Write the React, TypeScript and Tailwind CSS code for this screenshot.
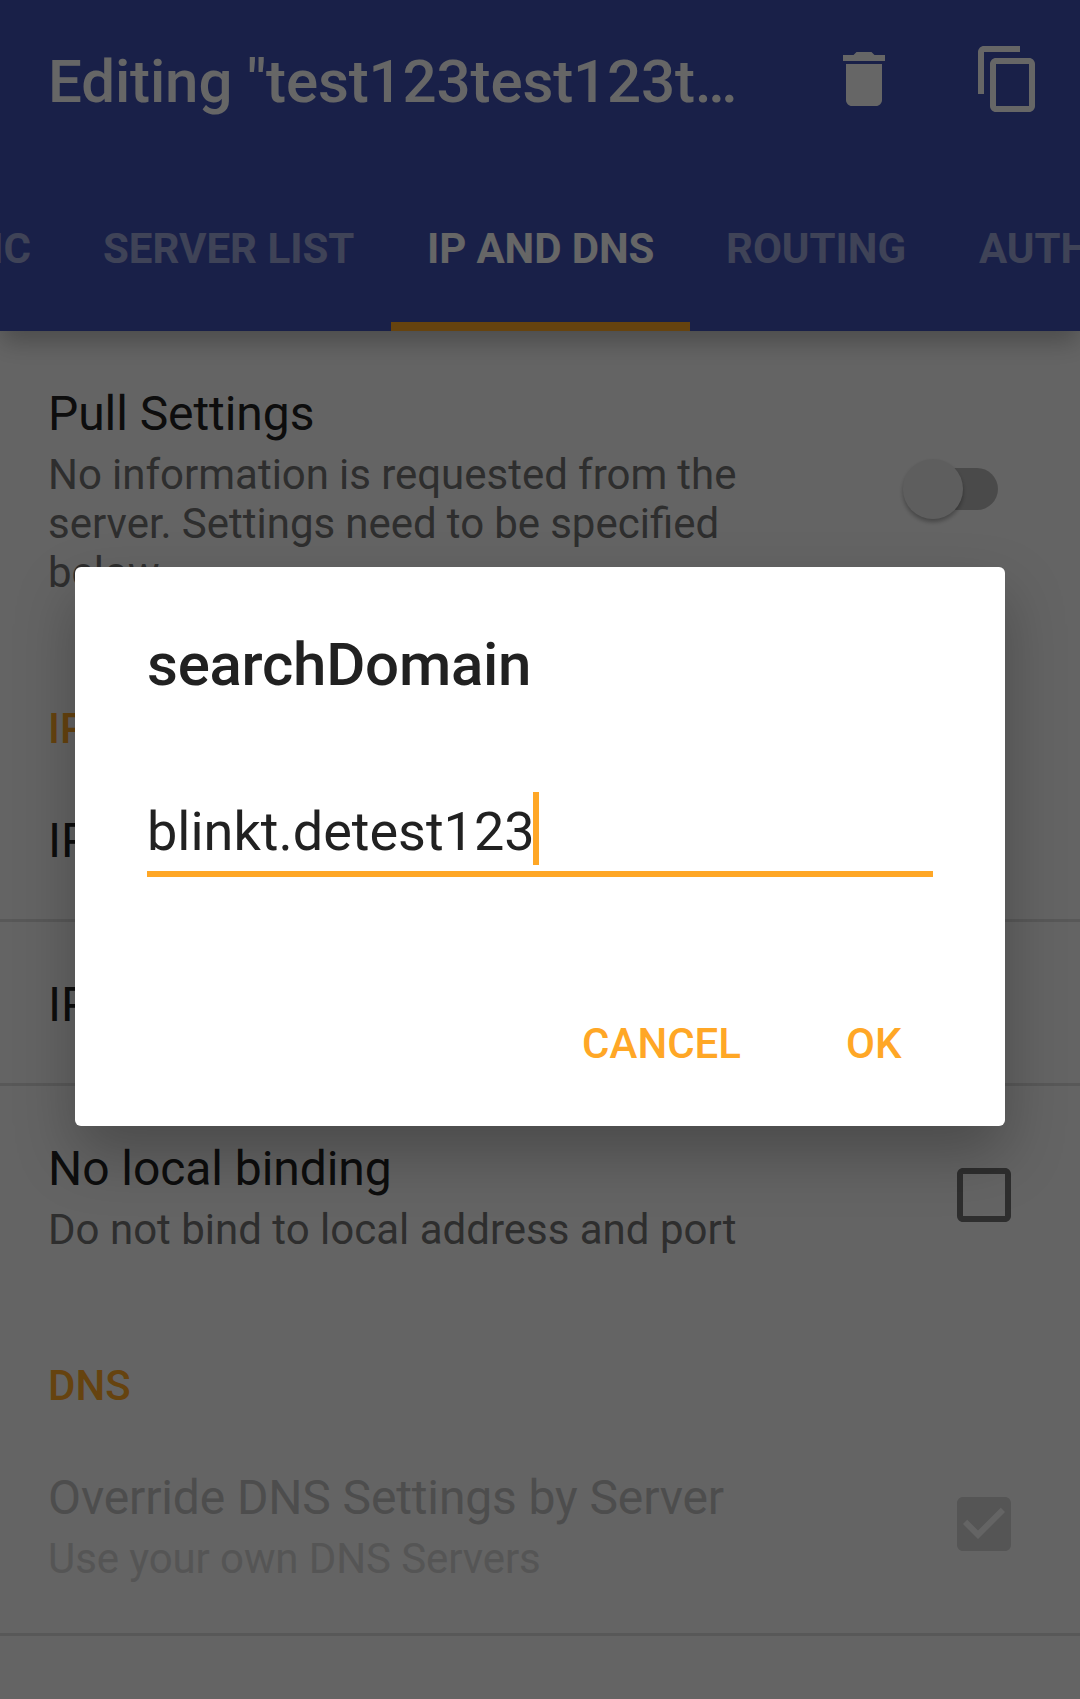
import type { ReactNode } from "react";

const TABS = [
  { label: "SERVER LIST", className: "w-[324px] text-white/50" },
  { label: "IP AND DNS", className: "w-[299px] border-b-9 border-[#ffa726] tracking-[-0.1px] text-white" },
  { label: "ROUTING", className: "w-[253px] text-white/50" },
  { label: "AUTHENTICATION", className: "text-white/50" },
];

function DeleteIcon() {
  return (
    <svg viewBox="0 0 24 24" className="size-[72px] shrink-0 fill-white">
      <path d="M6 19c0 1.1.9 2 2 2h8c1.1 0 2-.9 2-2V7H6v12zM19 4h-3.5l-1-1h-5l-1 1H5v2h14V4z" />
    </svg>
  );
}

function CopyIcon() {
  return (
    <svg viewBox="0 0 24 24" className="size-[72px] shrink-0 fill-white">
      <path d="M16 1H4c-1.1 0-2 .9-2 2v14h2V3h12V1zm3 4H8c-1.1 0-2 .9-2 2v14c0 1.1.9 2 2 2h11c1.1 0 2-.9 2-2V7c0-1.1-.9-2-2-2zm0 16H8V7h11v14z" />
    </svg>
  );
}

function Checkbox({ checked }: { checked?: boolean }) {
  return checked ? (
    <svg viewBox="0 0 24 24" className="mr-[60px] size-[72px] shrink-0 fill-[#d4d4d4]">
      <path d="M19 3H5c-1.11 0-2 .9-2 2v14c0 1.1.89 2 2 2h14c1.11 0 2-.9 2-2V5c0-1.1-.89-2-2-2zm-9 14l-5-5 1.41-1.41L10 14.17l7.59-7.59L19 8l-9 9z" />
    </svg>
  ) : (
    <svg viewBox="0 0 24 24" className="mr-[60px] size-[72px] shrink-0 fill-[#737373]">
      <path d="M19 5v14H5V5h14m0-2H5c-1.1 0-2 .9-2 2v14c0 1.1.9 2 2 2h14c1.1 0 2-.9 2-2V5c0-1.1-.9-2-2-2z" />
    </svg>
  );
}

function Toggle() {
  return (
    <div className="mr-[82px] flex h-[42px] w-[87px] shrink-0 items-center rounded-full bg-[#b9b9b9]">
      <div className="-ml-[8px] size-[60px] shrink-0 rounded-full bg-[#ececec] shadow-[0_3px_4px_rgba(0,0,0,0.3)]" />
    </div>
  );
}

function Section({ children }: { children: ReactNode }) {
  return (
    <h2 className="h-[111px] shrink-0 px-[48px] pt-[57px] text-[42px] leading-[49px] font-medium text-[#ffa726]">
      {children}
    </h2>
  );
}

type RowProps = {
  title: string;
  summary?: string;
  summaryClassName?: string;
  control?: ReactNode;
  disabled?: boolean;
  divider?: boolean;
  className: string;
};

function Row({ title, summary, summaryClassName = "", control, disabled, divider, className }: RowProps) {
  return (
    <div className={`flex shrink-0 items-center justify-between ${divider ? "border-b-3 border-[#dcdcdc]" : ""} ${className}`}>
      <div className="w-[790px] self-start pt-[55px] pl-[48px]">
        <div
          className={`text-[48px] leading-[56px] ${disabled ? "tracking-[-0.13px] text-[#c0c0c0]" : "tracking-[-0.07px] text-[#212121]"}`}
        >
          {title}
        </div>
        {summary && (
          <div
            className={`mt-2 text-[42px] leading-[49px] ${disabled ? "text-[#d4d4d4]" : "text-[#737373]"} ${summaryClassName}`}
          >
            {summary}
          </div>
        )}
      </div>
      {control}
    </div>
  );
}

export default function App() {
  return (
    <div className="relative h-[1699px] w-[1080px] overflow-hidden bg-[#fafafa] font-['Roboto',sans-serif]">
      <div className="flex h-full flex-col">
        <header className="z-10 flex h-[331px] shrink-0 flex-col bg-[#3f51b5] shadow-[0_12px_24px_-2px_rgba(0,0,0,0.26)]">
          <div className="flex h-[166px] items-start pt-[43px] pr-[36px] pl-[48px]">
            <h1 className="mt-[4px] flex-1 text-[60px] leading-[70px] font-medium tracking-[-0.12px] whitespace-nowrap text-white">
              Editing "test123test123t…
            </h1>
            <DeleteIcon />
            <div className="w-[72px]" />
            <CopyIcon />
          </div>
          <nav className="flex flex-1 overflow-hidden text-[42px] leading-[49px] font-bold whitespace-nowrap">
            <div className="flex w-[67px] shrink-0 justify-end pt-[58px] pr-[36px] text-white/50">BASIC</div>
            {TABS.map((t) => (
              <div key={t.label} className={`shrink-0 px-[36px] pt-[58px] ${t.className}`}>
                {t.label}
              </div>
            ))}
          </nav>
        </header>

        <Row
          className="h-[315px]"
          title="Pull Settings"
          summary="No information is requested from the server. Settings need to be specified below."
          summaryClassName="[word-spacing:-0.3px]"
          control={<Toggle />}
        />
        <div className="h-px shrink-0" />
        <Section>IP</Section>
        <Row className="h-[164px]" title="IPv4 Address" divider />
        <Row className="h-[164px]" title="IPv6 Address" divider />
        <Row
          className="h-[218px]"
          title="No local binding"
          summary="Do not bind to local address and port"
          control={<Checkbox />}
        />
        <Section>DNS</Section>
        <Row
          className="h-[221px]"
          title="Override DNS Settings by Server"
          summary="Use your own DNS Servers"
          summaryClassName="tracking-[-0.1px]"
          control={<Checkbox checked />}
          disabled
          divider
        />
      </div>

      {/* Scrim and dialog */}
      <div className="absolute inset-0 z-20 flex flex-col items-center bg-black/60 pt-[567px]">
        <div className="flex h-[559px] w-[930px] flex-col rounded-[6px] bg-white px-[72px] shadow-[0_28px_60px_rgba(0,0,0,0.26)]">
          <h2 className="mt-[63px] text-[60px] leading-[70px] font-medium tracking-[-0.25px] text-[#212121]">
            searchDomain
          </h2>
          <div className="mt-[92px] flex h-[85px] w-[786px] items-start border-b-6 border-[#ffa726]">
            <span className="mt-[8px] text-[54px] leading-[64px] text-[#212121]">blinkt.detest123</span>
            <span className="-ml-[2px] h-[73px] w-[6px] bg-[#ffa726]" />
          </div>
          <div className="mt-[142px] flex justify-end pr-[31.5px] text-[42px] leading-[49px] font-medium text-[#ffa726]">
            <span className="mr-[105px]">CANCEL</span>
            <span>OK</span>
          </div>
        </div>
      </div>
    </div>
  );
}
